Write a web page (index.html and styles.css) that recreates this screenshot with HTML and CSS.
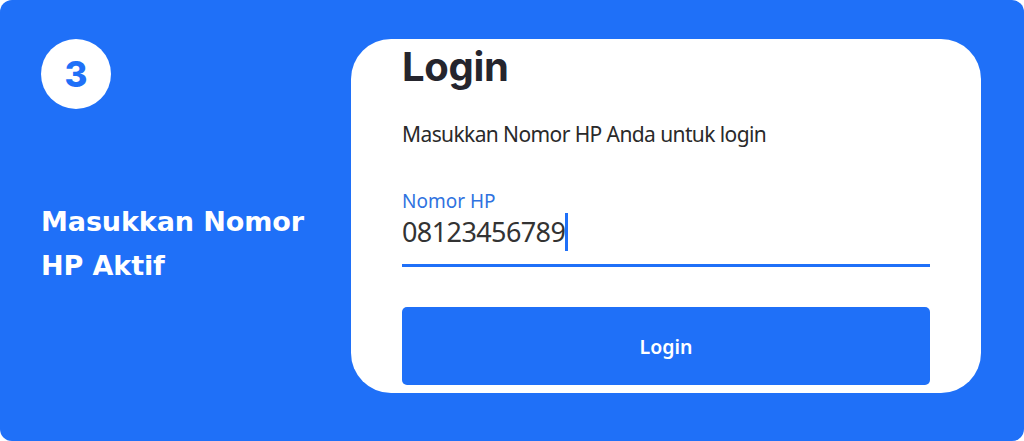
FILE: index.html
```html
<!DOCTYPE html>
<html lang="id">
<head>
    <meta charset="UTF-8">
    <meta name="viewport" content="width=device-width, initial-scale=1.0">
    <title>Langkah 3 - Login</title>
    <link rel="stylesheet" href="styles.css">
</head>
<body>

    <div class="step-card">
        <div class="step-info">
            <div class="step-number">3</div>
            <h2 class="step-title">Masukkan Nomor<br>HP Aktif</h2>
        </div>

        <div class="phone-screen">
            <h1>Login</h1>
            <p class="subtitle">Masukkan Nomor HP Anda untuk login</p>

            <div class="field">
                <label for="phone">Nomor HP</label>
                <div class="value"><span>08123456789</span><span class="caret"></span></div>
            </div>

            <button class="button">Login</button>
        </div>
    </div>

</body>
</html>
```

FILE: styles.css
```css
body {
    margin: 0;
    padding: 0;
    background-color: #ffffff;
    font-family: "Inter", sans-serif;
}
.step-card {
    box-sizing: border-box;
    width: 1024px;
    height: 441px;
    background-color: #1f70f8;
    border-radius: 12px;
    display: flex;
    padding: 39px 43px 0 41px;
}
.step-info {
    width: 310px;
}
.step-number {
    width: 70px;
    height: 70px;
    border-radius: 50%;
    background: #ffffff;
    color: #1f70f8;
    font-weight: 800;
    font-size: 35px;
    display: flex;
    align-items: center;
    justify-content: center;
}
.step-title {
    margin: 91px 0 0;
    color: #ffffff;
    font-family: "DejaVu Sans", sans-serif;
    font-size: 27px;
    font-weight: 700;
    line-height: 44px;
    letter-spacing: -0.1px;
}
.phone-screen {
    box-sizing: border-box;
    width: 630px;
    height: 354px;
    background: #ffffff;
    border-radius: 40px;
    padding: 0 51px;
    overflow: hidden;
}
.phone-screen h1 {
    margin: 4px 0 0;
    font-size: 40px;
    font-weight: 700;
    color: #25252d;
    line-height: 48px;
    letter-spacing: -0.3px;
}
.subtitle {
    margin: 29px 0 0;
    font-family: "Noto Sans", sans-serif;
    font-size: 21px;
    color: #2a2a2a;
    line-height: 28px;
    letter-spacing: -0.6px;
}
.field {
    margin-top: 41px;
    border-bottom: 3px solid #1f70f8;
    padding-bottom: 13px;
}
.field label {
    display: block;
    font-family: "Noto Sans", sans-serif;
    font-size: 19px;
    color: #2f72e0;
    line-height: 24px;
}
.value {
    display: flex;
    align-items: center;
    font-family: "Noto Sans", sans-serif;
    font-size: 27px;
    color: #333333;
    line-height: 38px;
    letter-spacing: -0.6px;
}
.caret {
    width: 3px;
    height: 38px;
    background: #1f70f8;
    margin-left: 0;
}
.button {
    display: block;
    width: 100%;
    height: 78px;
    margin-top: 40px;
    background: #1f70f8;
    color: #ffffff;
    border: none;
    border-radius: 5px;
    font-family: "Noto Sans", sans-serif;
    font-size: 19.5px;
    font-weight: 600;
    cursor: pointer;
}
```
